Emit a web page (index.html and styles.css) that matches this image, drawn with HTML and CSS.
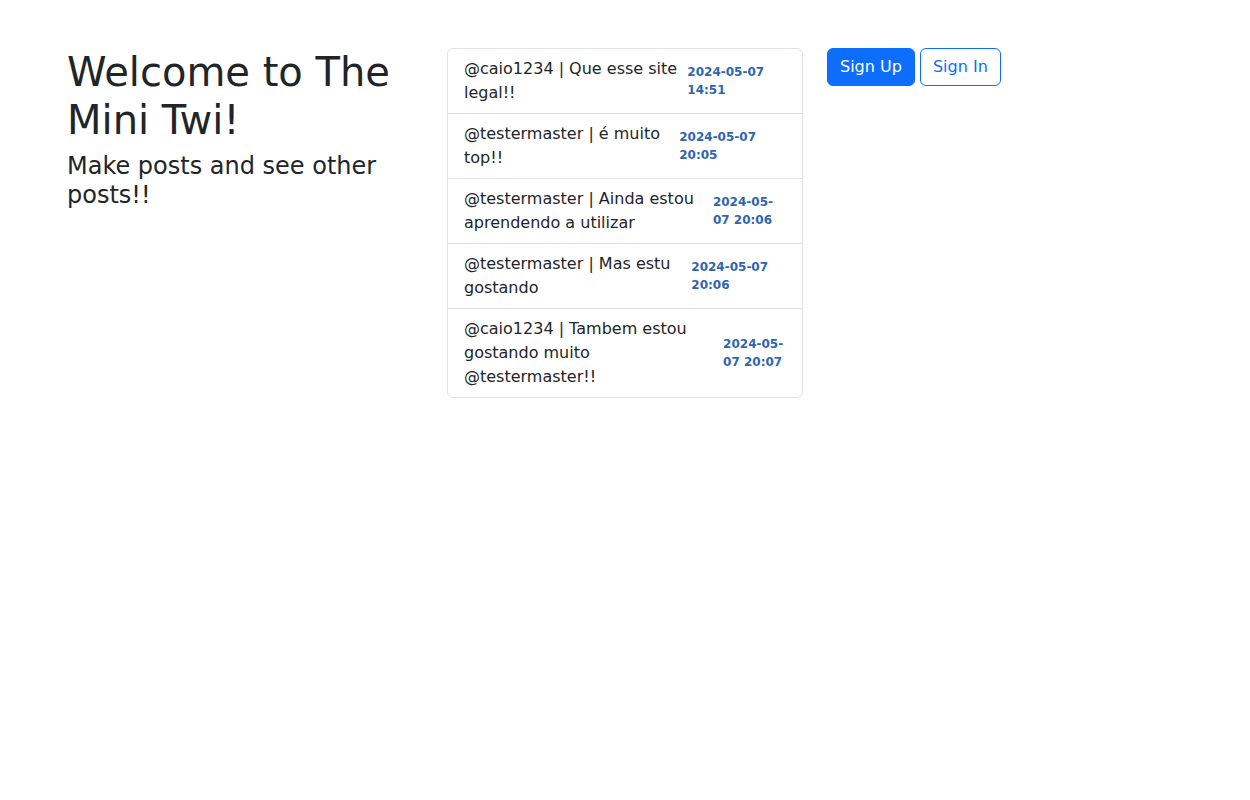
FILE: index.html
```html
<!DOCTYPE html>
<html lang="en">
<head>
<meta charset="utf-8">
<title>The Mini Twi</title>
<link rel="stylesheet" href="styles.css">
</head>
<body>
<div class="container">
  <div class="row">
    <div class="col">
      <h1 class="title">Welcome to The Mini Twi!</h1>
      <h4 class="subtitle">Make posts and see other posts!!</h4>
    </div>
    <div class="col">
      <ul class="list-group">
        <li class="list-item"><div class="post">@caio1234 | Que esse site legal!!</div><small class="stamp">2024-05-07 14:51</small></li>
        <li class="list-item"><div class="post">@testermaster | é muito top!!</div><small class="stamp">2024-05-07 20:05</small></li>
        <li class="list-item"><div class="post">@testermaster | Ainda estou aprendendo a utilizar</div><small class="stamp">2024-05-07 20:06</small></li>
        <li class="list-item"><div class="post">@testermaster | Mas estu gostando</div><small class="stamp">2024-05-07 20:06</small></li>
        <li class="list-item"><div class="post">@caio1234 | Tambem estou gostando muito @testermaster!!</div><small class="stamp">2024-05-07 20:07</small></li>
      </ul>
    </div>
    <div class="col">
      <a class="btn btn-primary" href="#">Sign Up</a> <a class="btn btn-outline" href="#">Sign In</a>
    </div>
  </div>
</div>
</body>
</html>
```

FILE: styles.css
```css
*, *::before, *::after { box-sizing: border-box; }
body {
  margin: 0;
  font-family: "DejaVu Sans", sans-serif;
  font-size: 16px;
  line-height: 1.5;
  color: #212529;
  background: #fff;
}
.container {
  max-width: 1140px;
  margin: 0 auto;
  padding: 48px 12px 0;
}
.row {
  display: flex;
  margin: 0 -12px;
}
.col {
  flex: 0 0 33.333333%;
  padding: 0 12px;
}
.title {
  margin: 0 0 8px;
  font-size: 40px;
  font-weight: 500;
  line-height: 1.2;
}
.subtitle {
  margin: 0 0 8px;
  font-size: 24px;
  font-weight: 500;
  line-height: 1.2;
}
.list-group {
  list-style: none;
  margin: 0;
  padding: 0;
  border: 1px solid #dee2e6;
  border-radius: 6px;
}
.list-item {
  display: flex;
  justify-content: space-between;
  align-items: center;
  padding: 8px 16px;
  border-top: 1px solid #dee2e6;
}
.list-item:first-child { border-top: 0; }
.stamp {
  font-size: 12px;
  font-weight: 700;
  line-height: 1.5;
  color: #2f65b0;
}
.btn {
  display: inline-block;
  padding: 6px 12px;
  font-size: 16px;
  line-height: 24px;
  border: 1px solid #0d6efd;
  border-radius: 6px;
  text-decoration: none;
  vertical-align: middle;
}
.btn-primary { background: #0d6efd; color: #fff; }
.btn-outline { background: #fff; color: #0d6efd; }
```
